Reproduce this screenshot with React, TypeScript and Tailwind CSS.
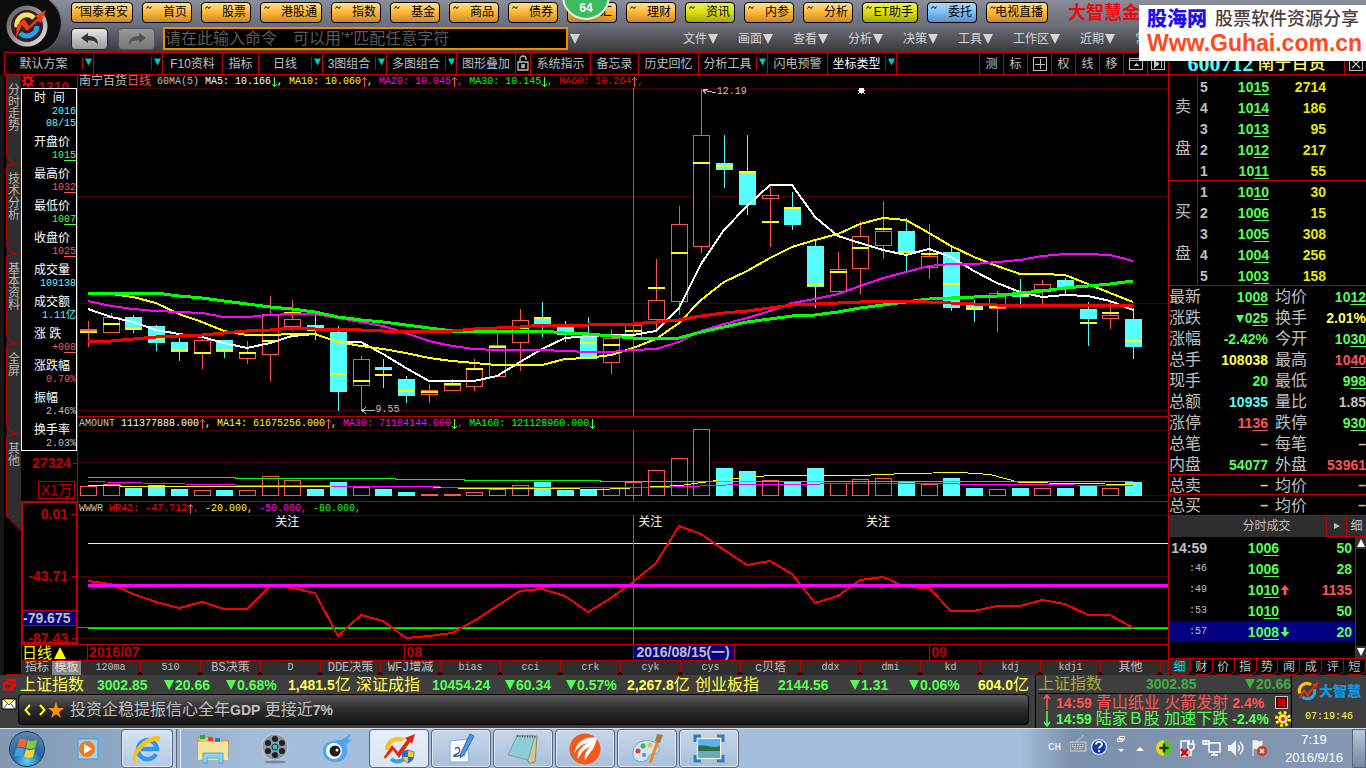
import React, { useState } from 'react';
import clsx from 'clsx';

const MONO = "font-[family-name:'Liberation_Mono','Noto_Sans_CJK_SC',monospace]";
const SERIF = "font-[family-name:'Liberation_Serif','Noto_Sans_CJK_SC',serif]";

// open/close/high/low/signal in chart units, one row per trading day
type Candle = [kind: 'u' | 'd', top: number, bottom: number, high: number, low: number, mark: number];

const candles: Candle[] = [
  ['u', 329, 330, 321, 347, 332], ['u', 317, 333, 313, 333, 324], ['d', 317, 329, 315, 333, 329],
  ['d', 326, 343, 325, 351, 338], ['d', 342, 352, 338, 361, 350], ['u', 340, 353, 339, 369, 353],
  ['d', 340, 352, 340, 358, 350], ['u', 353, 359, 341, 364, 353], ['u', 314, 355, 296, 381, 341],
  ['u', 319, 327, 300, 331, 313], ['d', 325, 331, 315, 340, 330], ['d', 332, 392, 326, 411, 374],
  ['u', 359, 386, 356, 410, 381], ['d', 367, 370, 359, 388, 375], ['d', 379, 396, 376, 403, 391],
  ['u', 390, 395, 384, 403, 392], ['u', 385, 391, 379, 391, 384], ['u', 368, 387, 359, 391, 369],
  ['u', 345, 377, 332, 377, 347], ['u', 320, 343, 309, 371, 328], ['d', 317, 325, 302, 337, 318],
  ['d', 326, 335, 321, 342, 333], ['d', 336, 359, 317, 359, 343], ['u', 338, 363, 329, 374, 345],
  ['u', 325, 338, 321, 338, 331], ['u', 300, 320, 259, 331, 288], ['u', 224, 302, 206, 315, 253],
  ['u', 135, 247, 89, 253, 163], ['d', 163, 170, 135, 188, 166], ['d', 172, 205, 135, 215, 172],
  ['u', 195, 199, 187, 247, 222], ['d', 208, 225, 192, 230, 208], ['d', 246, 287, 241, 308, 285],
  ['u', 269, 292, 252, 292, 272], ['u', 236, 269, 221, 294, 248], ['u', 231, 246, 201, 259, 229],
  ['d', 231, 252, 218, 272, 252], ['u', 256, 268, 224, 279, 254], ['d', 252, 308, 246, 311, 284],
  ['d', 305, 310, 300, 322, 309], ['u', 293, 309, 291, 332, 307], ['d', 293, 297, 279, 308, 295],
  ['u', 284, 290, 280, 304, 291], ['d', 280, 289, 278, 294, 288], ['d', 309, 319, 302, 346, 323],
  ['u', 315, 319, 301, 329, 313], ['d', 319, 347, 308, 359, 341],
];

const ma5 = [309, 317, 322, 330, 334, 337, 343, 348, 343, 336, 334, 342, 342, 354, 368, 381, 381, 381, 376, 362, 349, 338, 336, 335, 335, 331, 308, 264, 230, 206, 185, 185, 217, 236, 243, 250, 255, 249, 257, 271, 283, 292, 297, 295, 296, 301, 310];
const ma10 = [293, 294, 297, 303, 314, 322, 331, 335, 335, 334, 334, 342, 346, 349, 353, 358, 361, 363, 365, 365, 365, 359, 358, 355, 348, 339, 323, 300, 282, 271, 258, 247, 240, 234, 224, 218, 220, 233, 246, 257, 266, 274, 274, 275, 284, 293, 302];
const ma20 = [301, 306, 309, 311, 312, 313, 317, 317, 315, 314, 314, 318, 322, 326, 333, 341, 346, 349, 350, 350, 350, 351, 352, 352, 350, 349, 342, 331, 324, 318, 311, 303, 299, 294, 286, 278, 272, 266, 264, 264, 262, 260, 256, 254, 254, 255, 261];
const ma30 = [294, 293, 293, 293, 296, 298, 301, 304, 307, 309, 312, 317, 320, 322, 325, 328, 331, 332, 331, 331, 331, 333, 334, 336, 338, 339, 338, 332, 327, 322, 319, 316, 315, 312, 308, 305, 302, 299, 298, 297, 296, 293, 291, 288, 286, 284, 281];
const ma60 = [342, 341, 339, 337, 336, 335, 333, 331, 330, 328, 329, 329, 330, 331, 331, 331, 331, 329, 328, 327, 325, 325, 325, 324, 324, 322, 320, 316, 313, 311, 308, 305, 304, 303, 302, 301, 301, 302, 303, 304, 305, 305, 305, 305, 305, 305, 306];
const volume = [486, 484, 488, 485, 489, 490, 490, 490, 476, 480, 489, 482, 487, 489, 492, 494, 494, 492, 489, 485, 482, 490, 490, 487, 482, 470, 458, 429, 468, 471, 480, 482, 468, 483, 479, 478, 482, 484, 478, 488, 489, 488, 488, 488, 486, 488, 482];
const wr = [581, 584, 594, 602, 608, 602, 609, 609, 586, 588, 593, 636, 615, 621, 638, 636, 633, 621, 606, 591, 589, 596, 612, 598, 582, 563, 526, 534, 550, 565, 561, 574, 603, 596, 580, 577, 587, 588, 611, 611, 606, 606, 600, 604, 615, 615, 628];

const dayX = (i: number) => Math.round(88 + i * 22.72);
const toPoints = (ys: number[]) => ys.map((y, i) => `${dayX(i)},${y}`).join(' ');

const quickButtons = [
  { label: '国泰君安', tone: 'o', w: 'w-[62px]' }, { label: '首页', tone: 'o', w: 'w-[50px]' },
  { label: '股票', tone: 'o', w: 'w-[50px]' }, { label: '港股通', tone: 'o', w: 'w-[62px]' },
  { label: '指数', tone: 'o', w: 'w-[50px]' }, { label: '基金', tone: 'o', w: 'w-[50px]' },
  { label: '商品', tone: 'o', w: 'w-[50px]' }, { label: '债券', tone: 'o', w: 'w-[50px]' },
  { label: '外汇', tone: 'o', w: 'w-[50px]' }, { label: '理财', tone: 'o', w: 'w-[50px]' },
  { label: '资讯', tone: 'y', w: 'w-[50px]' }, { label: '内参', tone: 'o', w: 'w-[50px]' },
  { label: '分析', tone: 'o', w: 'w-[50px]' }, { label: 'ET助手', tone: 'y', w: 'w-[56px]' },
  { label: '委托', tone: 'b', w: 'w-[50px]' }, { label: '电视直播', tone: 'o', w: 'w-[62px]' },
];

const tones: Record<string, string> = {
  o: 'from-[#ffe08a] via-[#ffb733] to-[#c98a28]',
  y: 'from-[#eef24a] via-[#d9dd10] to-[#a8ab00]',
  b: 'from-[#a8d8ff] via-[#7fbdf5] to-[#5590cc]',
};

const menus = ['文件', '画面', '查看', '分析', '决策', '工具', '工作区', '近期', '常'];

const tools = [
  { label: '默认方案', w: 'w-[89px]', drop: true }, { label: '', w: 'w-[69px]', drop: true },
  { label: 'F10资料', w: 'w-[60px]' }, { label: '指标', w: 'w-[36px]' },
  { label: '日线', w: 'w-[64px]', drop: true }, { label: '3图组合', w: 'w-[64px]', drop: true },
  { label: '多图组合', w: 'w-[70px]', drop: true }, { label: '图形叠加', w: 'w-[59px]' },
  { label: 'lock', w: 'w-[15px]' }, { label: '系统指示', w: 'w-[60px]' },
  { label: '备忘录', w: 'w-[48px]' }, { label: '历史回忆', w: 'w-[60px]' },
  { label: '分析工具', w: 'w-[69px]', drop: true }, { label: '闪电预警', w: 'w-[60px]' },
  { label: '坐标类型', w: 'w-[69px]', drop: true, on: true },
];

const sideTabs = [
  { label: '分时走势', h: 'h-[89px] pt-[9px]' }, { label: '技术分析', h: 'h-[90px] pt-[9px]' },
  { label: '基本资料', h: 'h-[90px] pt-[9px]' }, { label: '全屏', h: 'h-[90px] pt-[9px]' },
  { label: '其他', h: 'h-[90px] pt-[9px]' },
];

const dayInfo = [
  ['开盘价', '1015', 'text-[#54ff54]', 2], ['最高价', '1032', 'text-[#ff5454]', 2],
  ['最低价', '1007', 'text-[#54ff54]', 2], ['收盘价', '1025', 'text-[#ff5454]', 2],
  ['成交量', '109138', 'text-[#54ffff]', 0], ['成交额', '1.11亿', 'text-[#54ffff]', 0],
  ['涨 跌', '+008', 'text-[#ff5454]', 2], ['涨跌幅', '0.79%', 'text-[#ff5454]', 0],
  ['振幅', '2.46%', 'text-[#c0c0c0]', 0], ['换手率', '2.03%', 'text-[#c0c0c0]', 0],
] as const;

const asks = [['5', '1015', '2714'], ['4', '1014', '186'], ['3', '1013', '95'], ['2', '1012', '217'], ['1', '1011', '55']];
const bids = [['1', '1010', '30'], ['2', '1006', '15'], ['3', '1005', '308'], ['4', '1004', '256'], ['5', '1003', '158']];

const G = 'text-[#54ff54]';
const R = 'text-[#ff5454]';
const Y = 'text-[#ffff54]';
const W = 'text-[#c0c0c0]';

const stats: [string, string, string, number, string, string, string, number][] = [
  ['最新', '1008', G, 2, '均价', '1012', G, 2],
  ['涨跌', '▼025', G, 2, '换手', '2.01%', Y, 0],
  ['涨幅', '-2.42%', G, 0, '今开', '1030', G, 2],
  ['总手', '108038', Y, 0, '最高', '1040', R, 2],
  ['现手', '20', G, 0, '最低', '998', G, 2],
  ['总额', '10935', 'text-[#54ffff]', 0, '量比', '1.85', W, 0],
  ['涨停', '1136', R, 2, '跌停', '930', G, 2],
  ['总笔', '–', W, 0, '每笔', '–', W, 0],
  ['内盘', '54077', G, 0, '外盘', '53961', R, 0],
  ['总卖', '–', 'text-[#e8e800]', 0, '均价', '–', W, 0],
  ['总买', '–', 'text-[#e8e800]', 0, '均价', '–', W, 0],
];

const ticks = [
  ['14:59', '1006', '', '50', G], [':46', '1006', '', '28', G], [':49', '1010', 'up', '1135', R],
  [':53', '1010', '', '50', G], [':57', '1008', 'down', '20', G],
];

const indicatorTabs = ['120ma', '510', 'BS决策', 'D', 'DDE决策', 'WFJ增减', 'bias', 'cci', 'crk', 'cyk', 'cys', 'c贝塔', 'ddx', 'dmi', 'kd', 'kdj', 'kdj1', '其他'];

const indices = [
  { name: '上证指数', nw: 'w-[77px]', last: '3002.85', lw: 'w-[66px]', chg: '20.66', cw: 'w-[62px]', pct: '0.68%', pw: 'w-[63px]', amt: '1,481.5亿', aw: 'w-[68px]' },
  { name: '深证成指', nw: 'w-[76px]', last: '10454.24', lw: 'w-[72px]', chg: '60.34', cw: 'w-[61px]', pct: '0.57%', pw: 'w-[62px]', amt: '2,267.8亿', aw: 'w-[68px]' },
  { name: '创业板指', nw: 'w-[83px]', last: '2144.56', lw: 'w-[71px]', chg: '1.31', cw: 'w-[59px]', pct: '0.06%', pw: 'w-[70px]', amt: '604.0亿', aw: 'w-[56px]' },
];

// Price with the last digits underlined, as the quote board prints cents
const Price: React.FC<{ v: string; u?: number }> = ({ v, u = 2 }) => (
  <>
    {v.slice(0, v.length - u)}
    {u > 0 && <span className="underline underline-offset-2">{v.slice(-u)}</span>}
  </>
);

const Tri: React.FC<{ className?: string }> = ({ className }) => (
  <svg viewBox="0 0 8 8" className={clsx('shrink-0', className)}><path d="M0 0h8L4 8z" fill="currentColor" /></svg>
);

const ThinArrow: React.FC<{ down?: boolean }> = ({ down }) => (
  <svg viewBox="0 0 6 12" shapeRendering="crispEdges" className={clsx('inline-block w-1.5 h-3 align-top', down ? 'text-[#54ff54]' : 'text-[#ff5454]')}>
    <path d={down ? 'M3 1h1v10H3zM2 9h3v1H2zM1 8h1v1H1zM5 8h1v1H5z' : 'M3 1h1v10H3zM2 2h3v1H2zM1 3h1v1H1zM5 3h1v1H5z'} fill="currentColor" />
  </svg>
);

const BoldArrow: React.FC<{ down?: boolean }> = ({ down }) => (
  <svg viewBox="0 0 10 10" className={clsx('w-2.5 h-2.5', down ? 'rotate-180 text-[#54ff54]' : 'text-[#ff5454]')}>
    <path d="M5 0l4.5 5H6.4v5H3.6V5H.5z" fill="currentColor" />
  </svg>
);

const SwirlLogo: React.FC<{ className?: string }> = ({ className }) => (
  <svg viewBox="0 0 34 32" className={className}>
    <path d="M4 20A12 12 0 0 1 22 6" fill="none" stroke="#ffc20e" strokeWidth="5" />
    <path d="M27 13A11.5 11.5 0 0 1 8 25" fill="none" stroke="#2aa9e0" strokeWidth="5" />
    <path d="M2 27L11 12l5 8L26 8l-2-2 10-5-4 10-2-2-12 17-5-8-6 9z" fill="#e8330c" />
  </svg>
);

function Header() {
  return (
    <header className="relative h-[52px] flex bg-linear-to-b from-[#8b8e9b] via-[#6b6d77] to-[#3a3a3c]">
      <div className="w-[71px] shrink-0">
        <svg viewBox="0 0 71 52" className="w-[71px] h-[52px]">
          <defs>
            <linearGradient id="ring" x1="0" y1="0" x2="1" y2="1">
              <stop offset="0" stopColor="#555" /><stop offset=".5" stopColor="#999" /><stop offset="1" stopColor="#eee" />
            </linearGradient>
          </defs>
          <path d="M0 0H49C59 8 62 16 61 27C59 41 50 50 40 52H0z" fill="#0c0c0c" />
          <path d="M49 0C59 8 62 16 61 27C59 41 50 50 40 52" fill="none" stroke="#666" />
          <circle cx="27" cy="26" r="20.5" fill="url(#ring)" />
          <circle cx="27" cy="26" r="16" fill="#381c20" />
          <path d="M17 27A10 10 0 0 1 34 18" fill="none" stroke="#fbe36a" strokeWidth="5" />
          <path d="M37 26A10 10 0 0 1 20 33" fill="none" stroke="#22a3e8" strokeWidth="5" />
          <path d="M16 38l1-13 7-6 5 7 9-8-3-2 11-6-5 13-3-2-11 10-5-6z" fill="#f03c14" />
        </svg>
      </div>
      <div className="flex-1 min-w-0 overflow-hidden">
        <div className="flex gap-[9px] pt-[2px] h-[26px]">
          {quickButtons.map((b) => (
            <button key={b.label} className={clsx('relative h-[21px] shrink-0 rounded-sm border border-black bg-linear-to-b text-right pr-1 text-xs leading-[19px] text-black whitespace-nowrap', tones[b.tone], b.w)}>
              <svg viewBox="0 0 6 3" className="absolute left-[3px] top-[3px] w-1.5 h-[3px]"><path d="M.5 2.500L2 .500 4 2.500 5.500.500" fill="none" stroke="#000" /></svg>
              {b.label}
            </button>
          ))}
          <span className="ml-[11px] text-lg leading-[22px] font-bold text-[#e80c0c] whitespace-nowrap">大智慧金</span>
        </div>
        <div className="flex items-center h-[25px]">
          <button aria-label="后退" className="w-[37px] h-[22px] rounded-sm border border-[#222] bg-linear-to-b from-[#e8e8e8] to-[#999] flex items-center justify-center shrink-0">
            <svg viewBox="0 0 20 12" className="w-5 h-3"><path d="M1 5L8 0v3c7 0 10 3 10 9C16 8 13 7 8 7.500V10z" fill="#333" /></svg>
          </button>
          <button aria-label="前进" className="ml-2.5 w-[37px] h-[22px] rounded-sm border border-[#555] bg-linear-to-b from-[#999] to-[#777] flex items-center justify-center shrink-0">
            <svg viewBox="0 0 20 12" className="w-5 h-3 -scale-x-100"><path d="M1 5L8 0v3c7 0 10 3 10 9C16 8 13 7 8 7.500V10z" fill="#555" /></svg>
          </button>
          <input aria-label="命令" placeholder="请在此输入命令　可以用'*'匹配任意字符" className="ml-2 w-[405px] h-[23px] shrink-0 bg-black border-2 border-[#f08c00] outline-none text-base leading-4 text-[#c0c0c0] placeholder:text-[#5a5a5a]" />
          <Tri className="w-3 h-2.5 ml-px text-[#d0d0d0]" />
          <nav className="flex gap-[19px] ml-[102px]">
            {menus.map((m) => (
              <button key={m} className="flex items-center shrink-0 text-xs leading-4 text-[#d4d4d4] whitespace-nowrap">
                {m}{m !== '常' && <Tri className="w-3 h-2.5" />}
              </button>
            ))}
          </nav>
        </div>
      </div>
      {/* floating speed ball */}
      <div className="absolute left-[562px] -top-[28px] w-12 h-12 rounded-full bg-[#3dbb5e] border-2 border-[#e8f5e8] shadow-md text-center pt-[26px] text-xs leading-4 font-bold text-white">64</div>
      {/* banner */}
      <div className="absolute right-0 top-[5px] z-20 w-[227px] h-[56px] bg-white pl-2">
        <div className="flex items-center gap-2 pt-[2px]">
          <span className="text-xl leading-6 font-black text-[#2010f0] whitespace-nowrap">股海网</span>
          <span className="text-lg leading-5 font-medium text-[#4a4040] whitespace-nowrap">股票软件资源分享</span>
        </div>
        <a href="#" className="block text-[23px] leading-6 font-bold text-[#ff4a1c]">Www.Guhai.com.cn</a>
      </div>
    </header>
  );
}

function Toolbar() {
  return (
    <div className="flex h-[23px] ml-1 border-y border-l border-[#c00000] text-xs leading-[22px] text-[#c0c0c0]">
      {tools.map((t) => (
        <button key={t.label} aria-label={t.label || '方案'} className={clsx('flex shrink-0 border-r border-[#c00000] whitespace-nowrap', t.w, t.on && 'text-white')}>
          <span className="flex-1 flex justify-center">
            {t.label === 'lock' ? (
              <svg viewBox="0 0 12 16" className="w-3 h-4 mt-0.5"><path d="M3 7V4a3 3 0 0 1 6 0v1M1 7h10v8H1zM4 10h4M4 12h4M6 9v4" fill="none" stroke="currentColor" strokeWidth="1.300" /></svg>
            ) : t.label}
          </span>
          {t.drop && <span className="w-[11px] h-[13px] my-1 border-l border-[#c00000] pl-0.5 pt-px flex"><Tri className="w-[7px] h-2 text-[#00c8c8]" /></span>}
        </button>
      ))}
      <div className="flex-1" />
      {['测', '标', '田', '权', '线', '移'].map((t) => (
        <button key={t} aria-label={t} className="w-6 shrink-0 border-l border-[#c00000]">
          {t === '田' ? <svg viewBox="0 0 14 14" shapeRendering="crispEdges" className="w-3.5 h-3.5 mx-auto"><path d="M.5.500h13v13H.5zM2 7h10M7 2v10" fill="none" stroke="currentColor" /></svg> : t}
        </button>
      ))}
      <button aria-label="窗口" className="w-6 shrink-0 border-l border-[#c00000]">
        <svg viewBox="0 0 14 12" shapeRendering="crispEdges" className="w-3.5 h-3 mx-auto"><path d="M.5.500h13v11H.5zM1 2.500h12" fill="none" stroke="currentColor" /><path d="M7 5l3 3H4z" fill="currentColor" /></svg>
      </button>
      <button aria-label="播放" className="w-[22px] shrink-0 border-x border-[#c00000]">
        <svg viewBox="0 0 14 12" shapeRendering="crispEdges" className="w-3.5 h-3 mx-auto"><path d="M.5.500h13v11H.5z" fill="none" stroke="currentColor" /><path d="M3 2l6 4-6 4zM10 2h1v8h-1z" fill="currentColor" /></svg>
      </button>
      <div className="w-[197px] shrink-0 flex">
        <div className="flex-1 flex items-center justify-center gap-1">
          <span className={clsx(SERIF, 'text-[22px] leading-5 font-bold text-[#54ffff]')}>600712</span>
          <span className="text-[17px] leading-5 font-medium text-[#ffff54] whitespace-nowrap">南宁百货</span>
        </div>
        <button aria-label="关闭" className="w-[22px] border-l border-[#c00000]">
          <svg viewBox="0 0 14 14" className="w-3.5 h-3.5 mx-auto"><path d="M.5.500h13v13H.5zM3 3l8 8M11 3l-8 8" fill="none" stroke="currentColor" strokeWidth="1.200" /></svg>
        </button>
      </div>
    </div>
  );
}

function SideTabs() {
  return (
    <aside className="relative w-[21px] shrink-0 bg-black border-l-4 border-[#161616]">
      <svg viewBox="4 75 17 600" className="absolute inset-0 w-[17px] h-[600px]">
        <path d="M6.500 75H21V530L6.500 516z" fill="#2e2e2e" />
        <path d="M6.500 75V156L14 164H21M14 164L6.500 166V246L14 254H21M14 254L6.500 256V336L14 344H21M14 344L6.500 346V426L14 434H21M14 434L6.500 436V516L21 531M6 674.500H21" fill="none" stroke="#c00000" />
      </svg>
      <nav className="relative">
        {sideTabs.map((t) => (
          <button key={t.label} className={clsx('block w-full pl-[3px] text-xs leading-3 text-[#b8b8b8]', t.h)}>
            <span className="flex flex-col h-full">{[...t.label].map((c) => <span key={c}>{c}</span>)}</span>
          </button>
        ))}
      </nav>
    </aside>
  );
}

const Legend: React.FC<{ children: React.ReactNode }> = ({ children }) => (
  <div className={clsx(MONO, 'h-[13px] pl-px flex items-center text-[10px] leading-3 whitespace-pre text-[#c0c0c0]')}>{children}</div>
);

function PriceChart() {
  return (
    <svg viewBox="78 88 1090 328" preserveAspectRatio="none" shapeRendering="crispEdges" className="block w-full h-[328px]">
      <path d="M78 88.500H1168M78 196.500H1168M78 303.500H1168M78 410.500H1168" stroke="#480000" />
      {candles.map(([kind, top, bottom, high, low, mark], i) => {
        const x = dayX(i);
        const up = kind === 'u';
        return (
          <g key={i}>
            <path d={`M${x + 0.5} ${high}V${low}`} stroke={up ? '#ff5454' : '#54ffff'} />
            {up
              ? <rect x={x - 7.5} y={top + 0.5} width={16} height={Math.max(1, bottom - top - 1)} fill="#000" stroke="#ff5454" />
              : <rect x={x - 8} y={top} width={17} height={bottom - top} fill="#54ffff" />}
            <rect x={x - 8} y={mark - 1} width={17} height={2} fill="#ffff00" />
          </g>
        );
      })}
      <path d="M633.500 88V416" stroke="#707070" />
      <g fill="none" strokeWidth="2">
        <polyline points={toPoints(ma5)} stroke="#fff" />
        <polyline points={toPoints(ma10)} stroke="#ffff00" />
        <polyline points={toPoints(ma20)} stroke="#ff00ff" />
        <polyline points={toPoints(ma30)} stroke="#00ff00" strokeWidth="3" />
        <polyline points={toPoints(ma60)} stroke="#ff0000" strokeWidth="3" />
      </g>
      <g stroke="#c0c0c0" fill="none">
        <path d="M703 90L716 93M703 90l5-1M703 90l3 4" />
        <path d="M362 410.500H375M366 407l-4 3.500 4 3.500" />
      </g>
      <path d="M859 88h5v5h-5zM858 87h1v1h-1zM864 87h1v1h-1zM858 93h1v1h-1zM864 93h1v1h-1zM861 87h1v7h-1zM858 90h7v1h-7z" fill="#fff" />
    </svg>
  );
}

function AmountChart() {
  return (
    <svg viewBox="78 430 1090 71" preserveAspectRatio="none" shapeRendering="crispEdges" className="block w-full h-[71px] overflow-visible">
      <path d="M78 430.500H1168M78 462.500H1168M78 495.500H1168" stroke="#480000" />
      {volume.map((top, i) => (
        candles[i][0] === 'u'
          ? <rect key={i} x={dayX(i) - 7.5} y={top + 0.5} width={16} height={Math.max(1, 495 - top)} fill="#000" stroke="#ff5454" />
          : <rect key={i} x={dayX(i) - 8} y={top} width={17} height={496 - top} fill="#54ffff" />
      ))}
      <path d="M633.500 430V501" stroke="#707070" />
      <g fill="none">
        <path d="M88 485.500H120V486.500H420L470 488.500H560L600 489.500 680 485.500 724 479.500 770 475.500 860 475.500 906 473.500 960 472.500 990 474.500 1020 482.500 1133 484.500" stroke="#ffff00" />
        <path d="M88 481.500L160 483.500 260 485.500 400 486.500 480 487.500 660 487.500 740 484.500 900 483.500 1133 485.500" stroke="#ff00ff" />
        <path d="M88 477.500H235V478.500H395V479.500H464V480.500H600V481.500H1133" stroke="#00ff00" />
      </g>
    </svg>
  );
}

function WrChart() {
  return (
    <svg viewBox="78 515 1090 129" preserveAspectRatio="none" shapeRendering="crispEdges" className="block w-full h-[129px]">
      <path d="M78 515.500H1168M78 576.500H1168M78 638.500H1168" stroke="#480000" />
      <path d="M88 543.500H1168" stroke="#ffff54" />
      <path d="M78 627.500H1168M633.500 515V644" stroke="#707070" />
      <path d="M88 628.500H1168" stroke="#00ff00" />
      <polyline points={toPoints(wr)} fill="none" stroke="#ff0000" strokeWidth="2" />
      <path d="M88 585.500H1168" stroke="#ff00ff" strokeWidth="3" />
    </svg>
  );
}

function ChartArea() {
  return (
    <main className="relative flex-1 min-w-0">
      <section className="flex h-[341px]">
        <div className="w-14 shrink-0 flex items-start pl-px">
          <svg viewBox="0 0 12 12" className="w-3 h-3 text-[#ff0000]"><path d="M3 3h6v6H3zM1 1l2 2M11 1L9 3M1 11l2-2M11 11L9 9M6 0v2M6 10v2M0 6h2M10 6h2" fill="none" stroke="currentColor" strokeWidth="2" /></svg>
          <span className="pl-1 pt-1 text-sm leading-4 font-bold text-[#c00000]">1310</span>
        </div>
        <div className="flex-1 min-w-0 relative border-l border-[#c00000]">
          <Legend>
            <span className="text-xs leading-3">南宁百货</span><span className="text-xs leading-3 text-[#ff5454]">日线</span>{' 60MA(5) '}
            <span className="text-white">MA5: 10.166<ThinArrow down />, </span>
            <span className="text-[#ffff00]">MA10: 10.060<ThinArrow />, </span>
            <span className="text-[#ff00ff]">MA20: 10.045<ThinArrow />, </span>
            <span className="text-[#00ff00]">MA30: 10.145<ThinArrow down />, </span>
            <span className="text-[#ff0000]">MA60: 10.264<ThinArrow />,</span>
          </Legend>
          <PriceChart />
          <span className={clsx(MONO, 'absolute left-[58.6%] top-[11px] text-[10px] leading-3 text-[#c0c0c0]')}>12.19</span>
          <span className={clsx(MONO, 'absolute left-[27.3%] top-[329px] text-[10px] leading-3 text-[#c0c0c0]')}>9.55</span>
        </div>
      </section>

      <section className="flex h-[85px]">
        <div className="w-14 shrink-0 flex flex-col items-end pt-[39px] text-[#c00000] font-bold">
          <span className="flex items-center text-sm leading-4">27324<i className="ml-0.5 w-1 h-px bg-[#c00000]" /></span>
          <span className="mt-2.5 mr-0.5 border border-[#c00000] px-0.5 text-sm leading-4 font-normal whitespace-nowrap">X1万</span>
        </div>
        <div className="flex-1 min-w-0 border-l border-t border-[#c00000]">
          <Legend>
            {'AMOUNT '}<span className="text-white">111377888.000<ThinArrow />, </span>
            <span className="text-[#ffff00]">MA14: 61675256.000<ThinArrow />, </span>
            <span className="text-[#ff00ff]">MA30: 71184144.000<ThinArrow down />, </span>
            <span className="text-[#00ff00]">MA160: 121128960.000<ThinArrow down /></span>
          </Legend>
          <AmountChart />
        </div>
      </section>

      <section className="flex h-[143px]">
        <div className="w-14 shrink-0 flex flex-col border-2 border-r border-[#c00000] text-sm leading-4 font-bold text-[#c00000]">
          <span className="flex items-center justify-end pt-[3px]">0.01<i className="ml-1 w-1 h-px bg-[#c00000]" /></span>
          <span className="flex items-center justify-end mt-[46px]">-43.71<i className="ml-1 w-1 h-px bg-[#c00000]" /></span>
          <span className="mt-[26px] h-4 bg-[#000080] border-y border-[#c00000] leading-[14px] text-[#c0c0c0]">-79.675</span>
          <span className="flex items-center justify-end mt-1">-87.43<i className="ml-1 w-1 h-px bg-[#c00000]" /></span>
        </div>
        <div className="flex-1 min-w-0 relative border-l border-t border-[#c00000]">
          <Legend>
            {'WWWR '}<span className="text-[#ff0000]">WR42: -47.712<ThinArrow />, </span>
            <span className="text-[#ffff00]">-20.000, </span><span className="text-[#ff00ff]">-50.000, </span><span className="text-[#00ff00]">-80.000,</span>
          </Legend>
          <WrChart />
          <span className="absolute left-[18.1%] top-3 text-xs leading-4 text-white">关注</span>
          <span className="absolute left-[51.4%] top-3 text-xs leading-4 text-white">关注</span>
          <span className="absolute left-[72.3%] top-3 text-xs leading-4 text-white">关注</span>
        </div>
      </section>

      <section className="flex h-4 border-t border-l border-[#c00000] leading-[15px]">
        <button className="w-[66px] shrink-0 border-r border-[#c00000] flex items-center text-[15px] leading-[15px] text-[#ffff00] whitespace-nowrap">
          日线<Tri className="w-3 h-3 ml-0.5 rotate-180" />
        </button>
        <div className="flex-1 min-w-0 relative text-sm leading-[15px] font-bold text-[#c00000]">
          <span className="absolute left-px">2016/07</span>
          <span className="absolute left-[29.3%] pl-px border-l border-[#c00000]">08</span>
          <span className="absolute left-[50.500%] bg-[#000080] border-x border-[#c00000] pl-0.5 pr-1 text-[#c0c0c0] whitespace-nowrap">2016/08/15(一)</span>
          <span className="absolute left-[77.900%] pl-px border-l border-[#c00000]">09</span>
        </div>
      </section>

      <nav className={clsx(MONO, 'flex h-[15px] border-t border-l border-[#c00000] bg-[#2e2e2e] text-[10px] leading-[14px] text-[#c0c0c0] overflow-hidden')}>
        <button className="w-[30px] shrink-0 text-xs leading-[14px]">指标</button>
        <button className="w-[29px] shrink-0 text-xs leading-[14px] bg-[#888] text-[#ddd]">模板</button>
        {indicatorTabs.map((t) => (
          <button key={t} className="relative w-[60px] shrink-0 border-r border-[#c00000] whitespace-nowrap">
            {/[^\x00-\x7f]/.test(t) ? <span className="text-xs leading-[14px]">{t}</span> : t}
            <svg viewBox="0 0 8 4" className="absolute -right-1 bottom-0 w-2 h-1"><path d="M0 4l4-4 4 4z" fill="#000" stroke="#c00000" strokeWidth=".6" /></svg>
          </button>
        ))}
      </nav>

      {/* cursor day details */}
      <div className="absolute left-0 top-[13px] w-14 h-[363px] bg-black border border-white text-xs text-white">
        <div className="pb-1 pt-px">
          <div className="pl-3 leading-4">时&nbsp;&nbsp;间</div>
          <div className={clsx(MONO, 'text-right text-[10px] leading-3 text-[#54ffff]')}>2016<br />08/15</div>
        </div>
        {dayInfo.map(([k, v, c, u]) => (
          <div key={k} className="h-8">
            <div className="pl-3 leading-4 whitespace-pre">{k}</div>
            <div className={clsx(MONO, 'text-right text-[10px] leading-3 whitespace-nowrap', c)}><Price v={v} u={u} /></div>
          </div>
        ))}
      </div>
    </main>
  );
}

const Depth: React.FC<{ side: string; rows: string[][] }> = ({ side, rows }) => (
  <div className="flex h-[105px] border-b border-[#c00000]">
    <div className="w-[29px] shrink-0 border-r border-[#c00000] flex flex-col items-center gap-[26px] pt-[23px] text-base leading-4 text-[#c0c0c0]">
      {[...side].map((c) => <span key={c}>{c}</span>)}
    </div>
    <table className="w-[128px] text-sm leading-5 font-bold">
      <tbody>
        {rows.map(([n, p, v]) => (
          <tr key={n} className="h-[21px]">
            <td className="pl-0.5 w-4 p-0 text-[#c0c0c0]">{n}</td>
            <td className="p-0 w-[55px] text-right text-[#54ff54]"><Price v={p} /></td>
            <td className="p-0 text-right text-[#e8e800]">{v}</td>
          </tr>
        ))}
      </tbody>
    </table>
  </div>
);

function QuotePanel() {
  const [tab, setTab] = useState('细');
  return (
    <aside className="w-[198px] shrink-0 border-l border-[#c00000]">
      <div className="h-px" />
      <Depth side="卖盘" rows={asks} />
      <Depth side="买盘" rows={bids} />
      <div className="text-sm font-bold">
        {stats.map(([k1, v1, c1, u1, k2, v2, c2, u2], i) => (
          <div key={k1} className={clsx('flex', i > 8 ? 'h-5 leading-5' : 'h-[21px] leading-[22px]', (i === 8 || i === 9) && 'border-b border-[#c00000]')}>
            <span className="w-8 shrink-0 text-base font-normal text-[#c0c0c0] whitespace-nowrap leading-[22px]">{k1}</span>
            <span className={clsx('w-[67px] shrink-0 text-right', c1)}>
              {v1.startsWith('▼') ? <><Tri className="inline-block w-2 h-2.5 mr-px" /><Price v={v1.slice(1)} u={u1} /></> : <Price v={v1} u={u1} />}
            </span>
            <span className="w-8 ml-[7px] shrink-0 text-base font-normal text-[#c0c0c0] whitespace-nowrap leading-[22px]">{k2}</span>
            <span className={clsx('flex-1 text-right', c2)}><Price v={v2} u={u2} /></span>
          </div>
        ))}
      </div>
      <div className="flex h-[22px] border-t border-[#c00000] bg-[#2e2e2e] text-xs leading-[21px] text-[#c0c0c0]">
        <span className="flex-1 pl-[38px] text-center">分时成交</span>
        <button aria-label="展开" className="w-5 border-l border-b border-[#c00000] flex items-center justify-center"><Tri className="w-3 h-1.5 -rotate-90" /></button>
        <button className="w-5 border-l border-b border-[#c00000]">细</button>
      </div>
      <div className="flex h-[121px]">
        <table className="flex-1 self-start text-sm leading-5 font-bold">
          <tbody>
            {ticks.map(([t, p, a, v, c], i) => (
              <tr key={t} className={clsx('h-[21px]', i === 4 && 'bg-[#000080]')}>
                <td className={clsx('p-0 w-[38px] text-right text-[#c0c0c0]', i > 0 && MONO, i > 0 && 'text-[10px] font-normal')}>{t}</td>
                <td className="p-0 w-[72px] text-right text-[#54ff54]"><Price v={p} /></td>
                <td className="p-0 w-3 pl-px">{a && <BoldArrow down={a === 'down'} />}</td>
                <td className={clsx('p-0 pr-[3px] text-right', c)}>{v}</td>
              </tr>
            ))}
          </tbody>
        </table>
        <div className="w-[11px] border-l border-[#c00000] flex flex-col justify-between">
          <button aria-label="上移" className="w-2.5 h-3 bg-[#333] flex items-center text-white"><Tri className="w-2.5 h-2 rotate-180" /></button>
          <button aria-label="下移" className="w-2.5 h-3 bg-[#333] flex items-center text-white"><Tri className="w-2.5 h-2" /></button>
        </div>
      </div>
      <nav className="flex h-[17px] border-t border-[#c00000] text-xs leading-4 text-[#c0c0c0]">
        {['细', '财', '价', '指', '势', '闻', '成', '评', '短'].map((t) => (
          <button key={t} onClick={() => setTab(t)} className={clsx('flex-1 rounded-b-md border-r border-b border-[#c00000]', t === tab && 'bg-[#2e2e2e] text-[#00e0e0]')}>{t}</button>
        ))}
      </nav>
    </aside>
  );
}

function StatusBars() {
  return (
    <footer className="flex h-[53px] bg-[#3e3e3e] text-sm">
      <div className="flex-1 min-w-0">
        <div className="flex h-[19px] items-center font-bold text-[#54ff54] whitespace-nowrap">
          <span className="w-5 shrink-0 pl-[3px]">
            <svg viewBox="0 0 13 12" className="w-[13px] h-3"><path d="M4 1h8v6H4z" fill="#3e3e3e" stroke="#f00" strokeWidth="2" /><path d="M1 4.500h8v6H1z" fill="#3e3e3e" stroke="#f00" strokeWidth="2" /></svg>
          </span>
          {indices.map((x) => (
            <React.Fragment key={x.name}>
              <span className={clsx('shrink-0 text-base leading-[18px] font-normal text-[#ffff54]', x.nw)}>{x.name}</span>
              <span className={clsx('shrink-0', x.lw)}>{x.last}</span>
              <span className={clsx('shrink-0 flex items-center', x.cw)}><Tri className="w-3 h-2.5" />{x.chg}</span>
              <span className={clsx('shrink-0 flex items-center', x.pw)}><Tri className="w-3 h-2.5" />{x.pct}</span>
              <span className={clsx('shrink-0 text-[#ffff54]', x.aw)}>{x.amt.slice(0, -1)}<span className="text-base leading-[18px] font-normal">亿</span></span>
            </React.Fragment>
          ))}
        </div>
        <div className="flex h-[31px]">
          <span className="w-[18px] shrink-0 pt-1 pl-px">
            <svg viewBox="0 0 16 12" className="w-4 h-3"><path d="M1 1h14v10H1z" fill="#fff" stroke="#000" /><path d="M2 1l6 6 6-6z" fill="#ffff54" stroke="#000" strokeWidth=".7" /><path d="M2 11l4-5M14 11l-4-5" stroke="#000" strokeWidth=".7" /></svg>
          </span>
          <div className="flex-1 mr-1.5 flex items-center rounded-sm border border-black bg-linear-to-b from-[#5c5c5c] via-[#2c2c2c] to-[#161616] text-base leading-5 text-[#c0c0c0] whitespace-nowrap">
            <svg viewBox="0 0 22 12" className="w-[22px] h-3 ml-[5px]"><path d="M6 1L1.500 6 6 11M16 1l4.500 5-4.500 5" fill="none" stroke="#ffff00" strokeWidth="2" /></svg>
            <svg viewBox="0 0 16 16" className="w-4 h-4 mx-0.5"><path d="M8 0l2 6h6l-5 4 2 6-5-4-5 4 2-6-5-4h6z" fill="#ff9400" /></svg>
            <a href="#" className="ml-1">投资企稳提振信心全年<b className="text-sm">GDP</b> 更接近<b className="text-sm">7%</b></a>
          </div>
        </div>
      </div>
      <div className="w-[257px] shrink-0 border-x border-black pl-0.5">
        <div className="flex h-[19px] items-center font-bold text-[#3fae3f] border-b border-black">
          <span className="w-[108px] text-base leading-[18px] font-normal text-[#a8a83c]">上证指数</span>
          <span className="flex-1">3002.85</span>
          <span className="flex items-center"><Tri className="w-3 h-2.5" />20.66</span>
        </div>
        <div className="flex">
          <svg viewBox="0 0 10 33" className="w-2.5 h-[33px] ml-1"><path d="M5 1v15M2 5l3-4 3 4" stroke="#ff5454" fill="none" strokeWidth="1.500" /><path d="M5 17v15M2 28l3 4 3-4" stroke="#54ff54" fill="none" strokeWidth="1.500" /></svg>
          <div className="flex-1 pl-1 pt-px leading-4 font-bold whitespace-nowrap">
            <a href="#" className="flex gap-1 text-[#ff5454]">14:59<span className="text-base leading-4 font-normal">青山纸业 火箭发射</span>2.4%</a>
            <a href="#" className="flex gap-1 text-[#54ff54]">14:59<span className="text-base leading-4 font-normal">陆家Ｂ股 加速下跌</span>-2.4%</a>
          </div>
          <div className="w-4 pt-0.5 flex flex-col gap-0.5">
            <svg viewBox="0 0 13 13" className="w-[13px] h-[13px]"><path d="M.5.500h12v12H.5z" fill="#400" stroke="#ccc" /><path d="M3 3.500h3M7 3.500h3M3 6.500h3M7 6.500h3M3 9.500h3M7 9.500h3" stroke="#f00" strokeWidth="2" /></svg>
            <svg viewBox="0 0 16 16" className="w-4 h-4"><circle cx="8" cy="8" r="6.500" fill="none" stroke="#ffff00" strokeWidth="3" strokeDasharray="2.600 2.500" /><circle cx="8" cy="8" r="3.500" fill="#f0f" stroke="#ffff00" strokeWidth="2.500" /></svg>
          </div>
        </div>
      </div>
      <div className="w-[74px] shrink-0 flex flex-col items-center pt-1.5">
        <div className="flex items-center"><SwirlLogo className="w-[22px] h-5" /><span className="text-sm leading-5 font-black text-[#1496e0] whitespace-nowrap">大智慧</span></div>
        <span className={clsx(MONO, 'mt-2 text-[10px] leading-4 text-[#ffff54]')}>07:19:46</span>
      </div>
    </footer>
  );
}

const icons: Record<string, React.ReactNode> = {
  player: <><path d="M9 5h18l3 22H9z" fill="#6fb0dc" /><path d="M5 6h20v20H5z" fill="#9fd0ee" stroke="#5795c4" /><circle cx="14" cy="16" r="8" fill="#f47a1a" /><path d="M11 11l8 5-8 5z" fill="#fff" /></>,
  ie: <><path d="M25 21A9.500 9.500 0 1 1 26 16H10" fill="none" stroke="#2f9be6" strokeWidth="4.500" /><path d="M2 27C0 18 14 2 28 3c3 2-1 7-1 7C27 3 8 14 5 25c-1 4 5 2 5 2-3 3-7 3-8 0z" fill="#f7c21e" /></>,
  folder: <><path d="M1 4h13l2 3h15v18H1z" fill="#e6c568" stroke="#b8923a" /><path d="M3 2h5v4H3z" fill="#2aa34a" /><path d="M11 4h5v4h-5z" fill="#e0402a" /><path d="M18 5h5v4h-5z" fill="#2a7ad0" /><path d="M1 9h30v18H1z" fill="#f7e39a" /><path d="M6 30V20h20v10h-4v-5H10v5z" fill="#8fd0ee" stroke="#5fa8cc" /></>,
  reel: <><circle cx="16" cy="14" r="13" fill="#8d979c" stroke="#c8d0d4" /><circle cx="16" cy="14" r="3" fill="#2cc0e8" stroke="#222" />{[[16, 6], [23, 10], [23, 18], [16, 22], [9, 18], [9, 10]].map(([x, y]) => <circle key={`${x}-${y}`} cx={x} cy={y} r="3" fill="#16242a" />)}<ellipse cx="16" cy="29" rx="11" ry="1.500" fill="#7888a0" /></>,
  eye: <><path d="M2 18C2 8 14 7 20 7l10-6-3 6 4-1-6 6c4 10-2 17-10 17S2 25 2 18z" fill="#4fa6ee" /><circle cx="13" cy="18" r="8" fill="#fff" /><circle cx="14" cy="18" r="5.500" fill="#1c1c22" /><circle cx="16" cy="17" r="1.500" fill="#fff" /></>,
  dzh: <><path d="M4 17A11 11 0 0 1 20 7" fill="none" stroke="#ffc20e" strokeWidth="4" /><path d="M22 25A10 10 0 0 1 8 26" fill="none" stroke="#2aa9e0" strokeWidth="4" /><path d="M1 24l8-12 6 7L24 7l-2-2 10-4-3 10-2-2-11 16-6-8-8 9z" fill="#e0260c" /><path d="M19 19l6-2 6 2c0 7-2 9-6 11-4-2-6-4-6-11z" fill="#f6cc2c" stroke="#777" /><path d="M25 17v7h-6v-5zM25 24h6c-1 3-3 5-6 6z" fill="#2a6cd0" /></>,
  pen: <><path d="M5 8l17-2 2 23H5z" fill="#f7fbff" stroke="#8aa8c8" /><path d="M10 16c4-5 7 3 2 5s-4 3 1 2 4-5 6 0" fill="none" stroke="#557" strokeWidth="1.500" /><path d="M25 1l4 2-10 19-4 3 1-5z" fill="#4a9ae0" stroke="#2b6cae" /></>,
  notepad: <><path d="M9 3h21l-2 26-6 1z" fill="#d8c590" stroke="#887" /><path d="M10 3h18l-7 24-20-5z" fill="#8fcdd4" stroke="#6aa5b0" /><path d="M10 3l19 1" stroke="#555" strokeWidth="2" strokeDasharray="1 1.500" /></>,
  east: <><circle cx="16" cy="16" r="15.500" fill="#f4581c" /><path d="M28 5C16 3 7 9 5 21c4-7 8-10 14-11C11 14 8 19 9 26c3-6 6-10 12-12-5 5-6 9-5 14 2-5 5-8 8-12 2-4 3-7 4-11z" fill="#fff" /></>,
  paint: <><path d="M2 18C4 8 16 5 25 10c6 5 3 12-3 11-5 0-4 3-6 6C10 31 0 28 2 18z" fill="#cfe4f4" stroke="#7aa5c8" /><circle cx="7" cy="18" r="2.500" fill="#e0402a" /><circle cx="12" cy="13" r="2.500" fill="#4ab04a" /><circle cx="19" cy="12" r="2.500" fill="#f2c22c" /><circle cx="13" cy="22" r="2" fill="#4a90d8" /><path d="M27 8l-8 22" stroke="#e88a28" strokeWidth="3" /><path d="M24 8l2-7 6 1-3 8z" fill="#a87844" /></>,
  photo: <><path d="M4 5h24v21H4z" fill="#fff" /><path d="M5 6h22v9H5z" fill="#5db2ee" /><path d="M5 13c6-3 12 3 22 0v6H5z" fill="#2f6c48" /><path d="M5 18h22v7H5z" fill="#6aa8bc" /><path d="M2 9V3h6M24 3h6v6M30 22v6h-6M8 28H2v-6" fill="none" stroke="#2c7cc4" strokeWidth="3" /></>,
};

const TaskIcon: React.FC<{ name: string; label: string; open?: boolean; active?: boolean }> = ({ name, label, open, active }) => (
  <button aria-label={label} className={clsx('w-[60px] h-[39px] shrink-0 flex items-center justify-center rounded-sm border', open ? 'border-[#56677c] ring-1 ring-inset ring-[#dce8f4] bg-linear-to-b' : 'border-transparent', open && (active ? 'from-[#e8f0f8] to-[#d8e4f0]' : 'from-[#c8d6e6] to-[#a8c0dc]'))}>
    <svg viewBox="0 0 32 32" className="w-8 h-8">{icons[name]}</svg>
  </button>
);

function Taskbar() {
  return (
    <div className="flex h-10 items-center gap-0.5 border-t border-[#d4e2f0] bg-linear-to-r from-[#8197b2] via-[#a5bedb] via-20% to-[#a5bedb] overflow-hidden">
      <button aria-label="开始" className="w-[57px] shrink-0 pl-2">
        <svg viewBox="0 0 38 38" className="w-[38px] h-[38px]">
          <defs><radialGradient id="orb" cx=".5" cy=".85" r=".8"><stop offset="0" stopColor="#5fd4f4" /><stop offset=".5" stopColor="#2268a4" /><stop offset="1" stopColor="#5a84a8" /></radialGradient></defs>
          <circle cx="19" cy="19" r="17.500" fill="url(#orb)" stroke="#173c60" />
          <path d="M11 10c3-2 5-1 8 0l-2 8c-3-1-5-2-8 0z" fill="#f0642a" /><path d="M20 10c3 2 6 1 9 0l-2 8c-3 1-6 1-9 0z" fill="#8cc83c" />
          <path d="M8 19c3-2 6-1 8 0l-2 8c-2-1-5-2-8 0z" fill="#3ca0e8" /><path d="M18 19c3 2 6 1 9 0l-2 8c-3 1-6 1-9 0z" fill="#fcd02c" />
        </svg>
      </button>
      <TaskIcon name="player" label="播放器" />
      <div className="flex w-[60px] shrink-0">
        <button aria-label="浏览器" className="w-[53px] h-[39px] rounded-sm border border-[#56677c] ring-1 ring-inset ring-[#dce8f4] bg-linear-to-b from-[#d4e2f2] to-[#b4cae4] flex items-center justify-center">
          <svg viewBox="0 0 32 32" className="w-8 h-8">{icons.ie}</svg>
        </button>
        <i className="w-1 border-r border-[#56677c] bg-[#b4cae4]" /><i className="w-1 border-r border-[#dce8f4]" />
      </div>
      <TaskIcon name="folder" label="资源管理器" />
      <TaskIcon name="reel" label="影音" />
      <TaskIcon name="eye" label="看图" />
      <TaskIcon name="dzh" label="行情" open active />
      <TaskIcon name="pen" label="手写" open />
      <TaskIcon name="notepad" label="记事本" open />
      <TaskIcon name="east" label="财富" open />
      <TaskIcon name="paint" label="画图" open />
      <TaskIcon name="photo" label="照片" open />
      <div className="flex-1" />
      <div className="w-[346px] h-full shrink-0 flex bg-linear-to-r from-transparent via-[#7c91ab] via-15% to-[#8498b2]">
        <span className={clsx(MONO, 'ml-7 mt-2.5 w-[22px] text-[11px] leading-4 text-white')}>CH</span>
        <svg viewBox="0 0 200 39" className="w-[200px] h-[39px] shrink-0">
          <path d="M0 13h16v9H0zM7 13c0-4 5-2 6-7" fill="none" stroke="#d8d4c8" /><path d="M2 15.500h12M2 17.500h12M4 19.500h8" stroke="#d8d4c8" strokeDasharray="1.500 1" />
          <circle cx="29" cy="18" r="7.500" fill="#1438a8" stroke="#c8d4ee" strokeWidth="1.500" />
          <path d="M26 15.500c0-3.500 6-3.500 6 0 0 2-3 2-3 4M29 21v2" stroke="#fff" fill="none" strokeWidth="1.800" />
          <path d="M49.500 7.500h5v3h-5zM47.500 9.500h5v3h-5z" fill="#8498b2" stroke="#fff" /><path d="M48 20h6l-3 3z" fill="#fff" />
          <path d="M66 22l4-4 4 4z" fill="#fff" />
          <circle cx="94" cy="19" r="8" fill="#e8d820" /><path d="M94 11a8 8 0 0 1 0 16z" fill="#60b830" /><path d="M94 14.500v9M89.500 19h9" stroke="#143c14" strokeWidth="2.500" />
          <path d="M111 12h7v15h-7zM118 15h6v4l-2 2h-2l-2-2zM119 11v4M123 11v4M121 21v5h-3" fill="none" stroke="#fff" strokeWidth="1.500" /><path d="M111 20l7 7M118 20l-7 7" stroke="#e00" strokeWidth="2.500" />
          <path d="M139 14h11v9h-11zM141 26h7M144 23v3M136 11v5M133 12h6v3h-6z" fill="none" stroke="#fff" strokeWidth="1.500" />
          <path d="M158 16h3l5-5v16l-5-5h-3z" fill="#eee" /><path d="M168 16c2 2 2 4 0 6M170 13c4 4 4 8 0 12" fill="none" stroke="#fff" strokeWidth="1.500" />
          <path d="M183 11v16M183 12c4-2 5 2 9 0v8c-4 2-5-2-9 0" fill="#eee" stroke="#eee" /><circle cx="192" cy="22" r="5" fill="#d83424" /><path d="M190 20l4 4M194 20l-4 4" stroke="#fff" strokeWidth="1.500" />
        </svg>
        <div className="flex-1 pl-3 pt-0.5 text-center text-[13px] leading-[18px] text-white">7:19<br />2016/9/16</div>
        <button aria-label="显示桌面" className="ml-1.5 w-3.5 border border-[#56677c] bg-linear-to-b from-[#b8c8da] to-[#7488a2]" />
      </div>
    </div>
  );
}

export default function App() {
  return (
    <div className="min-h-screen flex flex-col bg-black overflow-hidden font-[family-name:'Liberation_Sans','Noto_Sans_CJK_SC',sans-serif]">
      <Header />
      <Toolbar />
      <div className="flex">
        <SideTabs />
        <ChartArea />
        <QuotePanel />
      </div>
      <StatusBars />
      <Taskbar />
    </div>
  );
}
